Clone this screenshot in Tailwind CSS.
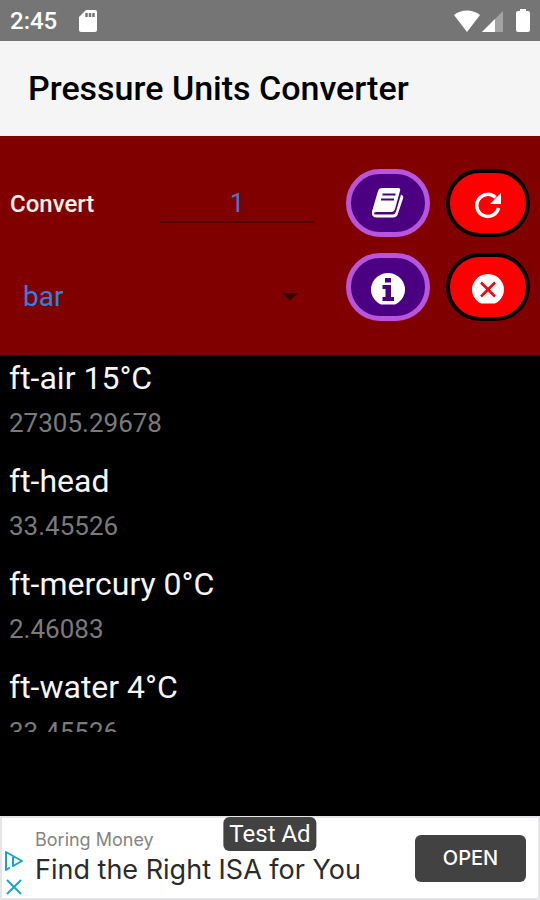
<!DOCTYPE html>
<html lang="en">

<head>
	<meta charset="UTF-8" />
	<meta name="viewport" content="width=device-width, initial-scale=1.0" />
	<script src="https://cdn.jsdelivr.net/npm/@tailwindcss/browser@4"></script>
	<title>Pressure Units Converter</title>
</head>

<body class="bg-black font-['Roboto',sans-serif]">
	<div class="flex flex-col h-screen">
		<!-- status bar -->
		<div class="flex items-center h-[41px] shrink-0 bg-[#757575] text-white pl-[10px] pr-[10px]">
			<span class="text-2xl font-medium">2:45</span>
			<svg class="ml-[21px]" width="20" height="24" viewBox="0 0 20 24">
				<path fill="#fff" d="M8 1h9a2 2 0 0 1 2 2v18a2 2 0 0 1-2 2H3a2 2 0 0 1-2-2V8z" />
				<path stroke="#757575" stroke-width="2.5" d="M8.500 4v4M12 4v4M15.500 4v4" />
			</svg>
			<svg class="ml-auto" width="28" height="24" viewBox="0 0 28 24">
				<path fill="#fff" d="M1 6C8 0 20 0 27 6L14 23z" />
			</svg>
			<svg class="ml-px" width="22" height="24" viewBox="0 0 22 24">
				<path fill="#a3a3a3" d="M0 23L21 2v21z" />
				<path fill="#fff" d="M0 23L13 10v13z" />
			</svg>
			<svg class="ml-3" width="14" height="24" viewBox="0 0 14 24">
				<path fill="#fff" d="M4 0h6v2h2a2 2 0 0 1 2 2v17a2 2 0 0 1-2 2H2a2 2 0 0 1-2-2V4a2 2 0 0 1 2-2h2z" />
			</svg>
		</div>

		<header class="flex items-center h-[95px] shrink-0 bg-[#f5f5f5] px-7">
			<h1 class="text-[34px] font-medium text-black">Pressure Units Converter</h1>
		</header>

		<form class="flex justify-between shrink-0 bg-[#800000] pt-[33px] pb-[34px] pl-[10px] pr-[10px]">
			<div class="flex flex-col flex-1 mr-8">
				<div class="flex items-center justify-between h-[70px]">
					<label for="amount" class="text-2xl font-medium text-[#fdf0e6]">Convert</label>
					<input type="text" id="amount" value="1" inputmode="decimal"
						class="w-[154px] h-[38px] border-b-2 border-[#4d0000] text-center text-[26px] text-[#3f7bd0] outline-none">
				</div>
				<div class="relative flex items-center h-11 mt-9">
					<select id="unit" aria-label="Unit"
						class="w-full h-11 appearance-none pl-[13px] text-[28px] leading-9 text-[#2f80e0] outline-none">
						<option>bar</option>
						<option>ft-air 15°C</option>
						<option>ft-head</option>
						<option>ft-mercury 0°C</option>
						<option>ft-water 4°C</option>
					</select>
					<svg class="absolute right-4 pointer-events-none" width="16" height="8" viewBox="0 0 16 8">
						<path fill="#3a0000" d="M0 0h16L8 8z" />
					</svg>
				</div>
			</div>
			<div class="grid grid-cols-2 gap-x-4 gap-y-4 content-start">
				<button type="button" id="bookBtn" aria-label="Reference"
					class="flex items-center justify-center w-[84px] h-[68px] rounded-full border-5 border-[#b855dc] bg-[#4b0082]">
					<svg width="34" height="32" viewBox="0 0 34 32">
						<path fill="#fff"
							d="M11 1h16q3 0 2 3l-5 18q-1 3-3 3H6q-3 0-3 1.300t2 1.200h17q2 0 3-3l5-17q3 1 2 4l-5 15q-1 4-5 4H6q-6 0-5-6L7 4q1-3 4-3z" />
						<path fill="none" stroke="#4b0082" stroke-width="2" d="M11.500 7.500h13M10 12.500h13" />
					</svg>
				</button>
				<button type="button" id="resetBtn" aria-label="Reset"
					class="flex items-center justify-center w-[84px] h-[68px] rounded-full border-4 border-black bg-[#ff0000]">
					<svg class="mt-1" width="28" height="28" viewBox="0 0 28 28">
						<path fill="none" stroke="#fff" stroke-width="3.500" d="M24.500 17A11 11 0 1 1 21.500 6.500" />
						<path fill="#fff" d="M27 2v11H16z" />
					</svg>
				</button>
				<button type="button" id="infoBtn" aria-label="Information"
					class="flex items-center justify-center w-[84px] h-[68px] rounded-full border-5 border-[#b855dc] bg-[#4b0082]">
					<svg class="mt-1" width="34" height="32" viewBox="0 0 34 32">
						<path fill="#fff" d="M10 31.500a17 16.500 0 1 1 14 0z" />
						<path fill="#4b0082" d="M14 5h6v4.500h-6zM11.500 12H20v12h3v4H11.500v-4H14.500v-8h-3z" />
					</svg>
				</button>
				<button type="button" id="clearBtn" aria-label="Clear"
					class="flex items-center justify-center w-[84px] h-[68px] rounded-full border-4 border-black bg-[#ff0000]">
					<svg class="mt-1" width="32" height="30" viewBox="0 0 32 30">
						<path fill="#fff" d="M9 29.500a16 15.500 0 1 1 14 0z" />
						<path stroke="#ff0000" stroke-width="2.500" d="M9 8.500l14 14M23 8.500l-14 14" />
					</svg>
				</button>
			</div>
		</form>

		<main class="flex-1 min-h-0 pb-[84px]">
			<ul class="h-full overflow-y-auto pl-[9px] [scrollbar-width:none]">
				<li class="h-[103px]">
					<h2 class="text-[32px] leading-[46px] text-[#f5f5f5]">ft-air 15°C</h2>
					<p class="text-[26px] leading-[44px] text-[#7a7a7a]">27305.29678</p>
				</li>
				<li class="h-[103px]">
					<h2 class="text-[32px] leading-[46px] text-[#f5f5f5]">ft-head</h2>
					<p class="text-[26px] leading-[44px] text-[#7a7a7a]">33.45526</p>
				</li>
				<li class="h-[103px]">
					<h2 class="text-[32px] leading-[46px] text-[#f5f5f5]">ft-mercury 0°C</h2>
					<p class="text-[26px] leading-[44px] text-[#7a7a7a]">2.46083</p>
				</li>
				<li class="h-[103px]">
					<h2 class="text-[32px] leading-[46px] text-[#f5f5f5]">ft-water 4°C</h2>
					<p class="text-[26px] leading-[44px] text-[#7a7a7a]">33.45526</p>
				</li>
			</ul>
		</main>

		<!-- ad banner -->
		<aside class="relative flex items-center h-[84px] shrink-0 bg-white border-2 border-[#e6e6e8] pl-[2px] pr-3 font-['Inter',sans-serif]">
			<div class="flex flex-col gap-2 mt-[30px]">
				<svg width="20" height="20" viewBox="0 0 20 20" fill="none" stroke="#1ba5c4" stroke-width="2"
					stroke-linejoin="round">
					<path d="M6 16.500L2 19V1l16 9-9 5V6" />
				</svg>
				<svg width="20" height="16" viewBox="0 0 20 16" stroke="#1ba5c4" stroke-width="2">
					<path d="M3 1l14 14M17 1L3 15" />
				</svg>
			</div>
			<div class="ml-[11px]">
				<p class="text-lg leading-6 text-[#858585]">Boring Money</p>
				<p class="text-[27px] leading-9 text-[#2b2b2b]">Find the Right ISA for You</p>
			</div>
			<button type="button"
				class="ml-auto w-[111px] h-[47px] rounded-md bg-[#424242] text-xl font-medium text-white">OPEN</button>
			<span
				class="absolute -top-px left-1/2 -translate-x-1/2 h-[34px] px-[6px] rounded-md bg-[#424242] font-['Roboto',sans-serif] text-2xl leading-[34px] text-white whitespace-nowrap">Test Ad</span>
		</aside>
	</div>
</body>

</html>
